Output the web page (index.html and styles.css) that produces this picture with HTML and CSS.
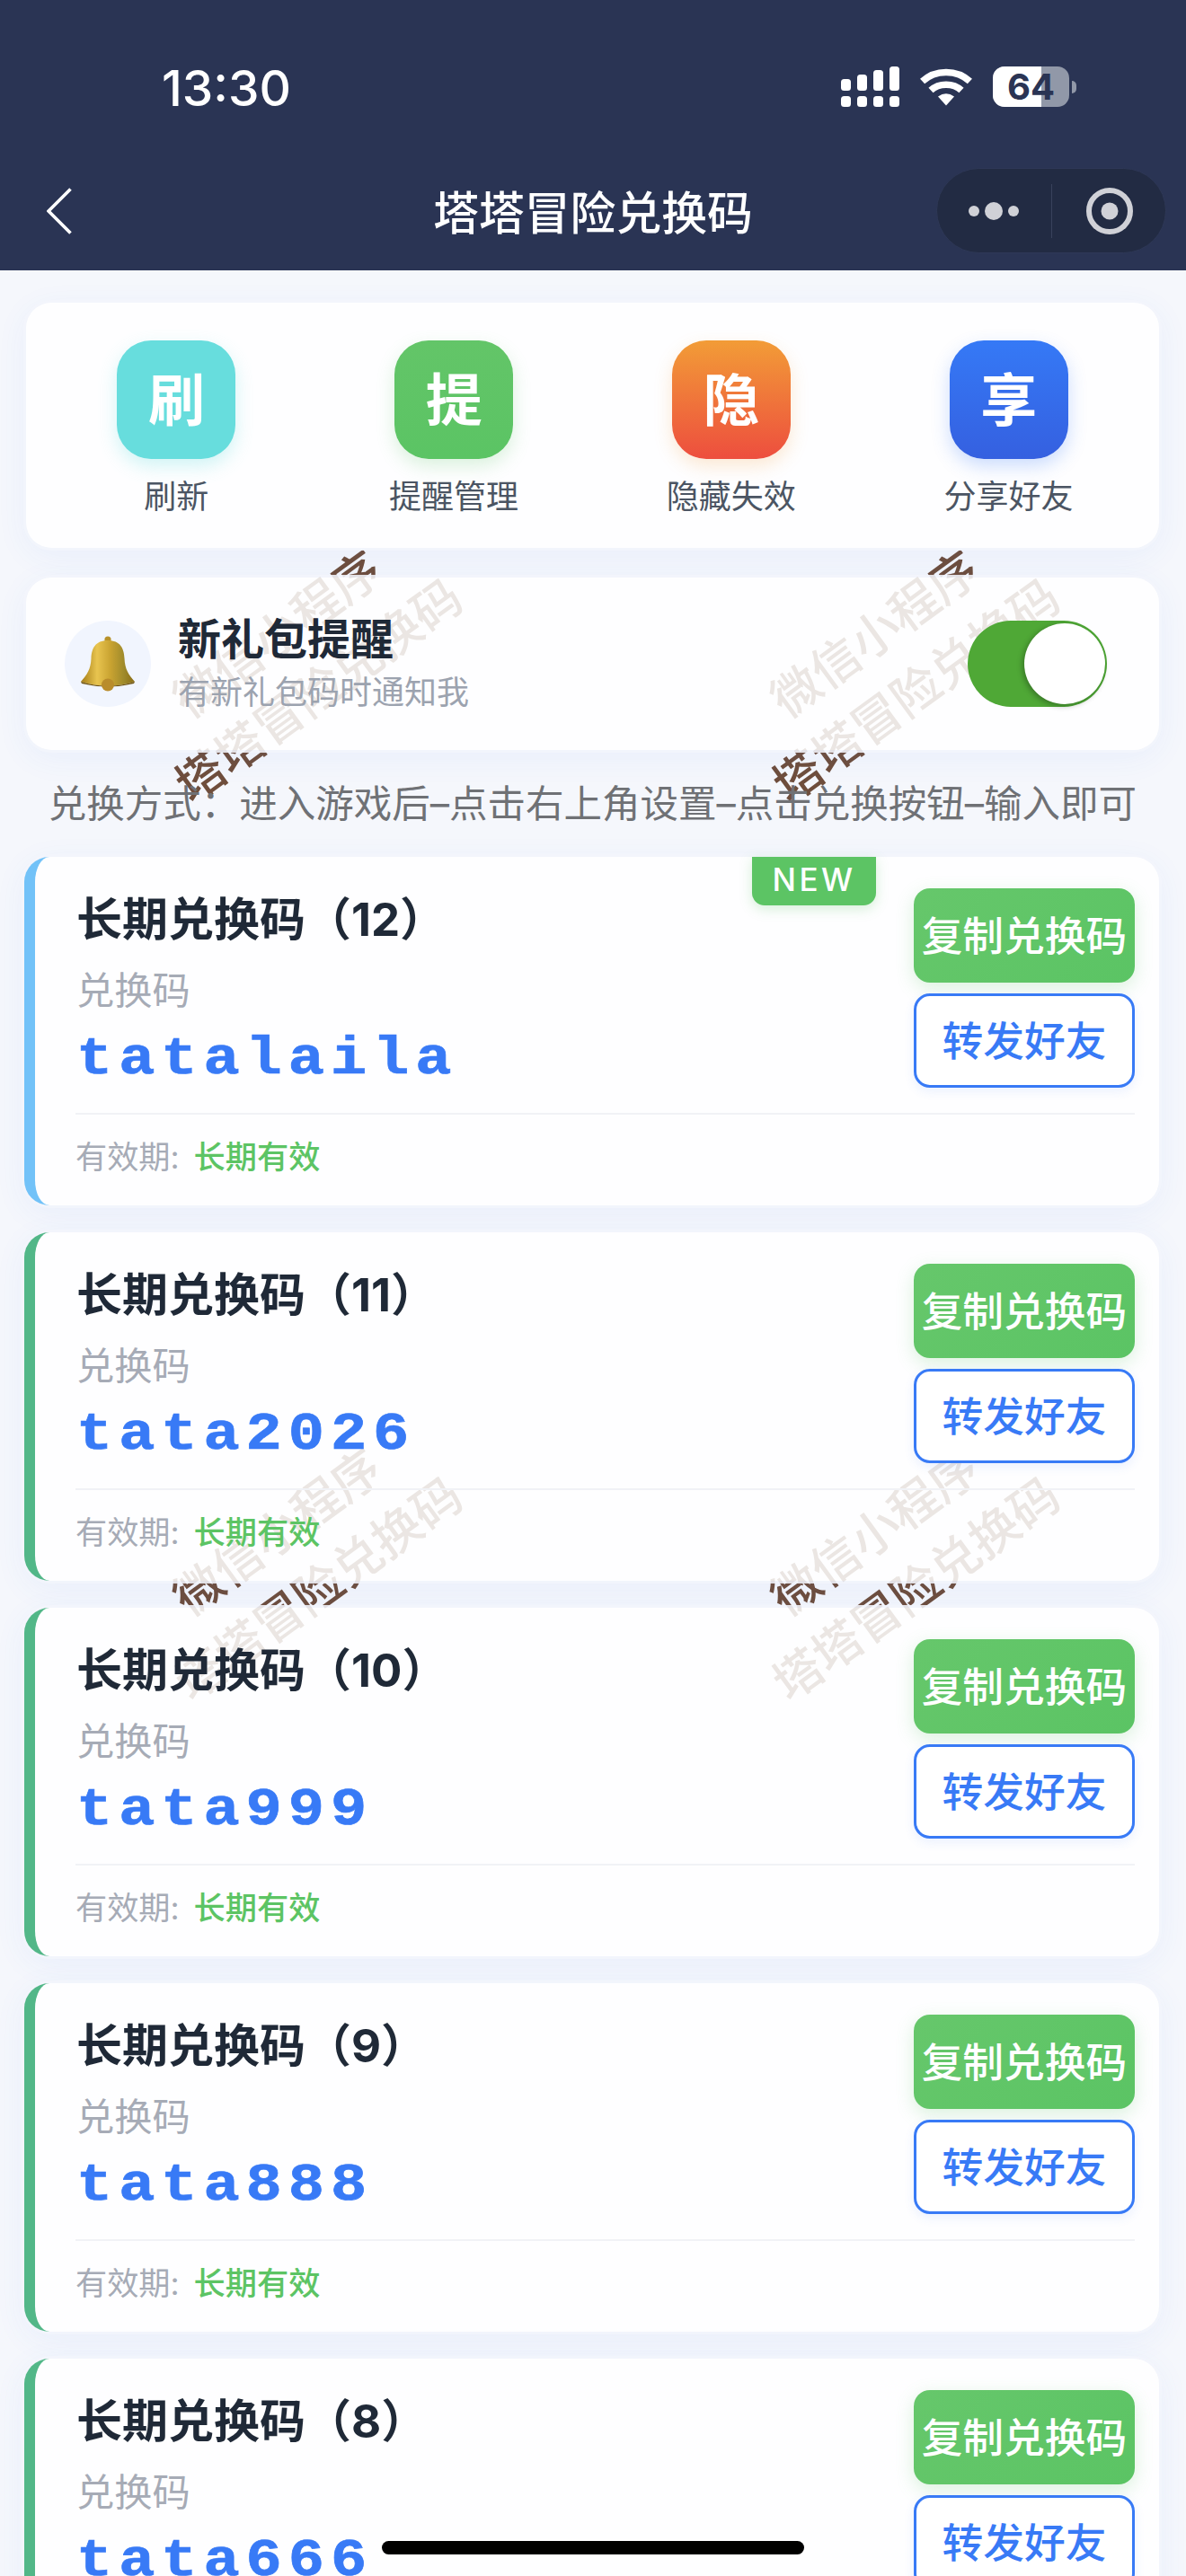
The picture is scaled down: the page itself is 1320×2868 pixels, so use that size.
FILE: index.html
```html
<!DOCTYPE html>
<html lang="zh-CN">
<head>
<meta charset="utf-8">
<title>塔塔冒险兑换码</title>
<link rel="stylesheet" href="styles.css">
</head>
<body>
<div class="page">
  <header class="header">
    <div class="status">
      <span class="time">13:30</span>
      <div class="status-icons">
        <svg class="signal" width="66" height="46" viewBox="0 0 66 46" fill="#fff">
          <rect x="0" y="14" width="11" height="13" rx="3.5"/><rect x="18" y="9" width="11" height="18" rx="3.5"/><rect x="36" y="4" width="11" height="23" rx="3.5"/><rect x="54" y="0" width="11" height="27" rx="3.5"/>
          <rect x="0" y="33" width="11" height="12" rx="3.5"/><rect x="18" y="33" width="11" height="12" rx="3.5"/><rect x="36" y="33" width="11" height="12" rx="3.5"/><rect x="54" y="33" width="11" height="12" rx="3.5"/>
        </svg>
        <svg class="wifi" width="58" height="43" viewBox="0 0 58 43" fill="none" stroke="#fff" stroke-width="7.5">
          <path d="M2.6 15.5C17 2 41 2 55.4 15.5"/>
          <path d="M12 25.5C21 17 37 17 46 25.5"/>
          <path d="M20 32.5Q29 26 38 32.5L29 42.5Z" fill="#fff" stroke="none"/>
        </svg>
        <div class="battery">
          <div class="battery-body"><span class="battery-fill"></span><span class="battery-num">64</span></div>
          <span class="battery-nub"></span>
        </div>
      </div>
    </div>
    <div class="nav">
      <svg class="back" width="28" height="52" viewBox="0 0 28 52" fill="none" stroke="#fff" stroke-width="3.6"><path d="M26.5 1.5L2 26L26.5 50.5"/></svg>
      <h1 class="nav-title">塔塔冒险兑换码</h1>
      <div class="capsule">
        <svg class="capsule-more" width="56" height="24" viewBox="0 0 56 24" fill="#d0d1d7"><circle cx="6" cy="12" r="6"/><circle cx="28" cy="12" r="10"/><circle cx="50" cy="12" r="6"/></svg>
        <span class="capsule-line"></span>
        <svg class="capsule-rec" width="52" height="52" viewBox="0 0 52 52"><circle cx="26" cy="26" r="23" fill="none" stroke="#d0d1d7" stroke-width="6"/><circle cx="26" cy="26" r="9.5" fill="#d0d1d7"/></svg>
      </div>
    </div>
  </header>

  <div class="watermarks" aria-hidden="true">
    <div class="wm wm-a"><p>微信小程序</p><p>塔塔冒险兑换码</p></div>
    <div class="wm wm-b"><p>微信小程序</p><p>塔塔冒险兑换码</p></div>
    <div class="wm wm-c"><p>微信小程序</p><p>塔塔冒险兑换码</p></div>
    <div class="wm wm-d"><p>微信小程序</p><p>塔塔冒险兑换码</p></div>
  </div>

  <main class="main">
    <section class="panel tools">
      <div class="tool"><div class="tool-icon cyan">刷</div><span class="tool-label">刷新</span></div>
      <div class="tool"><div class="tool-icon green">提</div><span class="tool-label">提醒管理</span></div>
      <div class="tool"><div class="tool-icon orange">隐</div><span class="tool-label">隐藏失效</span></div>
      <div class="tool"><div class="tool-icon blue">享</div><span class="tool-label">分享好友</span></div>
    </section>

    <section class="panel remind">
      <div class="bell-wrap">
        <svg width="62" height="62" viewBox="0 0 62 62">
          <defs>
            <linearGradient id="bellg" x1="0" x2="1" y1="0" y2="0">
              <stop offset="0" stop-color="#a47c17"/><stop offset=".3" stop-color="#e8c44f"/><stop offset=".55" stop-color="#c9a331"/><stop offset=".8" stop-color="#9f8a2b"/><stop offset="1" stop-color="#8a6c14"/>
            </linearGradient>
          </defs>
          <circle cx="31" cy="4" r="3.6" fill="#b8922a"/>
          <path d="M31 5C17 5 13 14 12.5 25C12 37 8 43 1 51Q31 60 61 51C54 43 50 37 49.5 25C49 14 45 5 31 5Z" fill="url(#bellg)"/>
          <path d="M1 51Q31 60 61 51L60 53Q31 60 2 53Z" fill="#6e5210"/>
          <circle cx="31" cy="54.5" r="7" fill="#b98c2b"/>
        </svg>
      </div>
      <div class="remind-text">
        <h2 class="remind-title">新礼包提醒</h2>
        <p class="remind-sub">有新礼包码时通知我</p>
      </div>
      <div class="toggle"><span class="knob"></span></div>
    </section>

    <p class="howto">兑换方式：进入游戏后–点击右上角设置–点击兑换按钮–输入即可</p>

    <article class="card first">
      <span class="badge">NEW</span>
      <div class="card-top">
        <div class="card-info">
          <h3 class="card-title">长期兑换码（12）</h3>
          <p class="card-sub">兑换码</p>
          <p class="code">tatalaila</p>
        </div>
        <div class="card-btns"><button class="btn copy">复制兑换码</button><button class="btn share">转发好友</button></div>
      </div>
      <div class="card-foot">有效期: <em>长期有效</em></div>
    </article>

    <article class="card">
      <div class="card-top">
        <div class="card-info">
          <h3 class="card-title">长期兑换码（11）</h3>
          <p class="card-sub">兑换码</p>
          <p class="code">tata2026</p>
        </div>
        <div class="card-btns"><button class="btn copy">复制兑换码</button><button class="btn share">转发好友</button></div>
      </div>
      <div class="card-foot">有效期: <em>长期有效</em></div>
    </article>

    <article class="card">
      <div class="card-top">
        <div class="card-info">
          <h3 class="card-title">长期兑换码（10）</h3>
          <p class="card-sub">兑换码</p>
          <p class="code">tata999</p>
        </div>
        <div class="card-btns"><button class="btn copy">复制兑换码</button><button class="btn share">转发好友</button></div>
      </div>
      <div class="card-foot">有效期: <em>长期有效</em></div>
    </article>

    <article class="card">
      <div class="card-top">
        <div class="card-info">
          <h3 class="card-title">长期兑换码（9）</h3>
          <p class="card-sub">兑换码</p>
          <p class="code">tata888</p>
        </div>
        <div class="card-btns"><button class="btn copy">复制兑换码</button><button class="btn share">转发好友</button></div>
      </div>
      <div class="card-foot">有效期: <em>长期有效</em></div>
    </article>

    <article class="card">
      <div class="card-top">
        <div class="card-info">
          <h3 class="card-title">长期兑换码（8）</h3>
          <p class="card-sub">兑换码</p>
          <p class="code">tata666</p>
        </div>
        <div class="card-btns"><button class="btn copy">复制兑换码</button><button class="btn share">转发好友</button></div>
      </div>
      <div class="card-foot">有效期: <em>长期有效</em></div>
    </article>
  </main>
  <div class="home-bar"></div>
</div>
</body>
</html>
```

FILE: styles.css
```css
* { box-sizing: border-box; margin: 0; padding: 0; }
html, body { height: 2868px; overflow: hidden; }
body {
  background: #f5f7fc;
  font-family: Inter, "Noto Sans CJK SC", sans-serif;
  color: #1f2937;
}
.page { position: relative; height: 2868px; overflow: hidden; }

/* header */
.header { height: 301px; background: #2a3454; color: #fff; position: relative; z-index: 3; }
.status { height: 187px; display: flex; justify-content: space-between; padding: 68px 122px 0 180px; }
.time { font-size: 55px; line-height: 60px; font-weight: 500; }
.status-icons { display: flex; align-items: flex-start; height: 46px; margin-top: 6px; }
.signal { margin-right: 22px; }
.wifi { margin-top: 1px; margin-right: 23px; }
.battery { display: flex; align-items: center; height: 45px; }
.battery-body { position: relative; width: 85px; height: 45px; border-radius: 13px; background: #9198a8; overflow: hidden; display: flex; align-items: center; justify-content: center; }
.battery-fill { position: absolute; left: 0; top: 0; bottom: 0; width: 54px; background: #fff; }
.battery-num { position: relative; font-size: 40px; line-height: 45px; font-weight: 700; color: #2a3454; }
.battery-nub { width: 5px; height: 14px; margin-left: 3px; background: #9198a8; border-radius: 0 7px 7px 0; }

.nav { position: relative; height: 95px; display: flex; align-items: center; justify-content: center; }
.back { position: absolute; left: 52px; top: 22px; }
.nav-title { font-size: 50.8px; line-height: 60px; font-weight: 500; margin-top: 6px; }
.capsule { position: absolute; left: 1042px; top: 0; width: 256px; height: 95px; border-radius: 48px; background: #222b43; border: 1px solid #2e3857; display: flex; align-items: center; }
.capsule-more { margin-left: 35px; }
.capsule-line { width: 1px; height: 60px; background: #39425c; margin-left: 36px; }
.capsule-rec { margin-left: 38px; }

/* watermark, lying under the translucent cards */
.watermarks { position: absolute; inset: 0; z-index: 0; }
.wm { position: absolute; width: 440px; text-align: center; color: #6f4e3c; font-size: 54px; font-weight: 500; line-height: 78px; transform: rotate(-36deg); white-space: nowrap; }
.wm-a { left: 112px; top: 660px; }
.wm-b { left: 777px; top: 660px; }
.wm-c { left: 112px; top: 1660px; }
.wm-d { left: 777px; top: 1660px; }

/* main */
.main { position: relative; z-index: 1; padding: 36px 30px 0 27px; }
.panel, .card {
  background: rgba(255,255,255,.86);
  border-radius: 28px;
  box-shadow: 0 0 0 3px rgba(243,245,252,.88), 0 8px 36px rgba(59,110,246,.07);
}
.panel { margin-left: 2px; }
.tools { height: 273px; padding: 42px 13px 0; display: grid; grid-template-columns: repeat(4, 1fr); }
.tool { display: flex; flex-direction: column; align-items: center; }
.tool-icon { width: 132px; height: 132px; border-radius: 38px; display: flex; align-items: center; justify-content: center; color: #fff; font-size: 63px; line-height: 1; font-weight: 700; }
.cyan { background: #67dddd; box-shadow: 0 8px 20px rgba(103,221,221,.3); }
.green { background: linear-gradient(#63c568, #5bc464); box-shadow: 0 8px 20px rgba(92,196,100,.22); }
.orange { background: linear-gradient(#f29c37, #ed4e3e); box-shadow: 0 8px 20px rgba(242,156,55,.22); }
.blue { background: linear-gradient(#3579f6, #3560e0); box-shadow: 0 8px 20px rgba(53,121,246,.25); }
.tool-label { margin-top: 19px; font-size: 36px; line-height: 46px; color: #4b5563; }

.remind { margin-top: 33px; height: 192px; display: flex; align-items: center; padding: 0 58px 0 43px; }
.bell-wrap { width: 96px; height: 96px; border-radius: 50%; background: #f1f5fe; display: flex; align-items: center; justify-content: center; }
.remind-text { flex: 1; margin-left: 30px; }
.remind-title { font-size: 48px; line-height: 56px; font-weight: 700; color: #1f2937; }
.remind-sub { margin-top: 8px; font-size: 36px; line-height: 46px; color: #9ca3af; }
.toggle { position: relative; width: 155px; height: 96px; border-radius: 48px; background: #4fa836; }
.knob { position: absolute; right: 2px; top: 3px; width: 90px; height: 90px; border-radius: 50%; background: #fff; box-shadow: -2px 2px 6px rgba(0,0,0,.3); }

.howto { margin-top: 32px; height: 87px; margin-left: 2px; text-align: center; font-size: 42.5px; line-height: 56px; color: #6f7175; white-space: nowrap; }

/* code cards */
.card { position: relative; height: 388px; margin-bottom: 30px; border-left: 12px solid #52b788; padding: 35px 27px 0 45px; }
.first { border-left-color: #72c2f8; }
.badge { position: absolute; right: 315px; top: 0; width: 138px; height: 54px; border-radius: 0 0 14px 14px; background: #5cc464; color: #fff; font-size: 35px; line-height: 50px; font-weight: 500; letter-spacing: 3.5px; text-align: center; box-shadow: 0 4px 14px rgba(92,196,100,.25); }
.card-top { display: flex; justify-content: space-between; height: 250px; }
.card-info { padding-left: 1px; }
.card-title { font-size: 51px; line-height: 60px; font-weight: 700; color: #1f2937; margin-top: 5px; }
.card-sub { margin-top: 23px; font-size: 42.24px; line-height: 52px; color: #a6abb6; }
.code { margin-top: 15px; font-family: "Liberation Mono", monospace; font-weight: 700; font-size: 59.84px; line-height: 70px; letter-spacing: 6.2px; color: #387af6; -webkit-text-stroke: .7px #387af6; transform: scaleX(1.12); transform-origin: left center; }
.card-btns { display: flex; flex-direction: column; gap: 12px; width: 246px; }
.btn { height: 105px; border-radius: 18px; font-family: inherit; font-size: 45.76px; font-weight: 500; padding-bottom: 6px; cursor: pointer; }
.copy { border: 0; color: #fff; background: linear-gradient(135deg, #66c76b, #5bc464); box-shadow: 0 6px 20px rgba(92,196,100,.22); }
.share { background: #fff; border: 3.5px solid #387af6; color: #387af6; box-shadow: 0 4px 12px rgba(56,122,246,.1); }
.card-foot { margin-top: 0; padding-top: 24px; border-top: 2px solid #f1f2f6; font-size: 35.2px; line-height: 46px; color: #a6abb6; }
.card-foot em { font-style: normal; font-weight: 500; color: #5cc464; margin-left: 6px; }

.home-bar { position: fixed; left: 425px; top: 2829px; width: 470px; height: 15px; border-radius: 8px; background: #000; z-index: 5; }
```
